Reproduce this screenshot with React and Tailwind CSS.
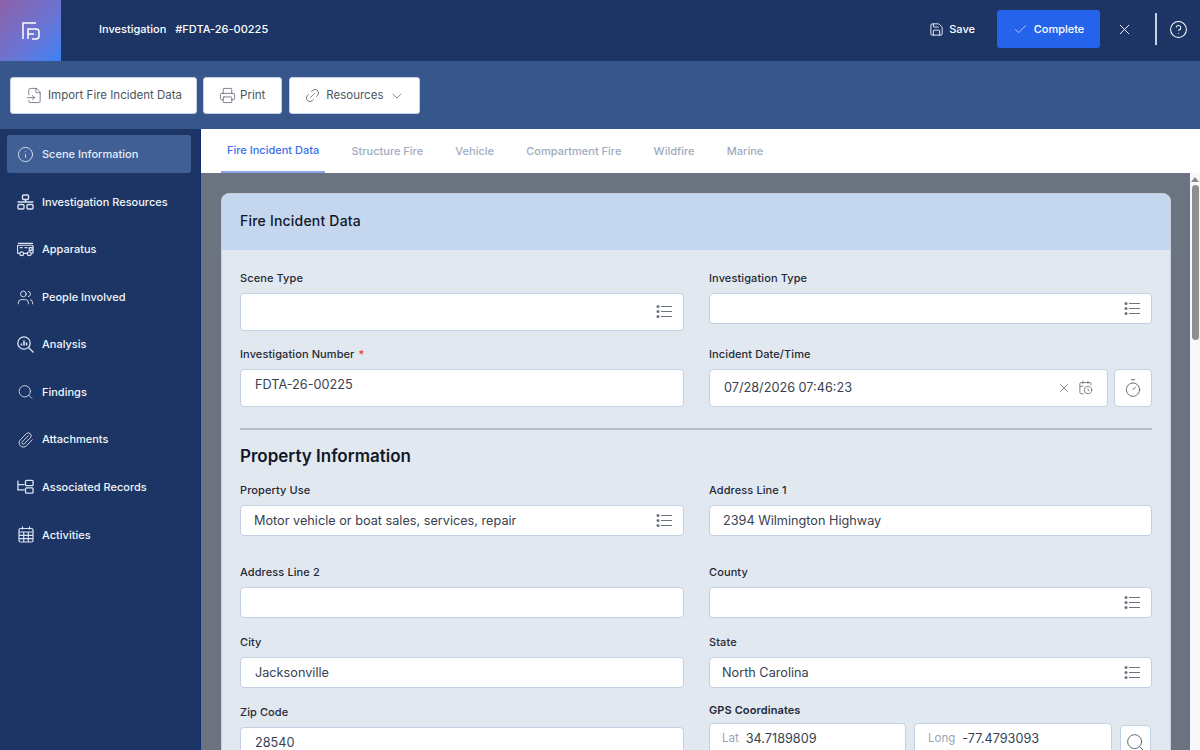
import React from "react";
import {
  FileInput, Printer, Link2, ChevronDown, Save, Check, X, CircleHelp, Info, Users,
  Search, Paperclip, CalendarClock, Timer,
} from "lucide-react";

function ListIcon() {
  return (
    <svg width="16" height="15" viewBox="0 0 16 15" fill="none" stroke="#6b7280" strokeWidth="1">
      <circle cx="2" cy="2.500" r="1.500" fill="#6b7280" stroke="none" />
      <circle cx="2" cy="7.500" r="1.500" fill="#6b7280" stroke="none" />
      <circle cx="2" cy="12.500" r="1.500" fill="#6b7280" stroke="none" />
      <path d="M5 2.500h11M5 7.500h11M5 12.500h11" />
    </svg>
  );
}

function ResourcesIcon() {
  return (
    <svg width="17" height="16" viewBox="0 0 17 16" fill="none" stroke="currentColor" strokeWidth="1.400">
      <rect x="5.500" y="1" width="6" height="4.500" rx="1" />
      <rect x="1" y="10.500" width="6" height="4.500" rx="1" />
      <rect x="10" y="10.500" width="6" height="4.500" rx="1" />
      <path d="M0.500 8h16M8.500 5.500V8" />
    </svg>
  );
}

function TruckIcon() {
  return (
    <svg width="18" height="15" viewBox="0 0 18 15" fill="none" stroke="currentColor" strokeWidth="1.300">
      <path d="M1 1h16" />
      <path d="M3 11.500H1.500a1 1 0 0 1-1-1V4a1 1 0 0 1 1-1h14.500a1 1 0 0 1 1 1v6.500a1 1 0 0 1-1 1H15M7 11.500h4" />
      <circle cx="5" cy="12" r="2" />
      <circle cx="13" cy="12" r="2" />
      <path d="M3 5.500h3M8 5.500h3M13 5.500h3v3h-3z" />
    </svg>
  );
}

function AnalysisIcon() {
  return (
    <svg width="17" height="17" viewBox="0 0 17 17" fill="none" stroke="currentColor" strokeWidth="1.300">
      <circle cx="7" cy="7" r="6.200" />
      <path d="m11.500 11.500 5 5" />
      <path d="M4.500 9.500V7.500M7 9.500V4.500M9.500 9.500V6.500" strokeWidth="1.600" />
    </svg>
  );
}

function RecordsIcon() {
  return (
    <svg width="18" height="16" viewBox="0 0 18 16" fill="none" stroke="currentColor" strokeWidth="1.400">
      <path d="M1 1v10h7M1 5.500h7" />
      <rect x="9" y="1" width="8" height="5.500" rx="1" />
      <rect x="9" y="9" width="8" height="5.500" rx="1" />
    </svg>
  );
}

function CalendarGridIcon() {
  return (
    <svg width="16" height="17" viewBox="0 0 16 17" fill="none" stroke="currentColor" strokeWidth="1.200">
      <rect x="1" y="2.500" width="14" height="13.500" rx="1.500" />
      <path d="M4.500 0.500v3M11.500 0.500v3" />
      <path d="M1 6h14M1 9.300h14M1 12.600h14M5.700 6v10M10.300 6v10" />
    </svg>
  );
}

function LogoIcon() {
  return (
    <svg width="18" height="18" viewBox="0 0 18 18" fill="none" stroke="white" strokeWidth="1.500">
      <path d="M1 17V1h13" />
      <path d="M6 17V7h8a3 3 0 0 1 3 3v4a3 3 0 0 1-3 3H10" />
      <path d="M6 12h6" />
    </svg>
  );
}

const NAV = [
  { label: "Scene Information", icon: <Info size={19} strokeWidth={1.3} />, active: true },
  { label: "Investigation Resources", icon: <ResourcesIcon /> },
  { label: "Apparatus", icon: <TruckIcon /> },
  { label: "People Involved", icon: <Users size={19} strokeWidth={1.3} /> },
  { label: "Analysis", icon: <AnalysisIcon /> },
  { label: "Findings", icon: <Search size={20} strokeWidth={1.2} /> },
  { label: "Attachments", icon: <Paperclip size={18} strokeWidth={1.3} /> },
  { label: "Associated Records", icon: <RecordsIcon /> },
  { label: "Activities", icon: <CalendarGridIcon /> },
];

const TABS = ["Fire Incident Data", "Structure Fire", "Vehicle", "Compartment Fire", "Wildfire", "Marine"];

function Input({ value, tall, list, pad = "pl-[13px]", right = "pr-[11px]", lift, children }) {
  return (
    <div
      className={`flex items-center flex-1 min-w-0 bg-white border border-[#c3cfe2] rounded-[4px] text-[12.700px] text-[#374151] ${
        tall ? "h-[37.500px]" : "h-[30.500px]"
      } ${pad} ${right} ${lift ? "pb-[6px]" : ""}`}
    >
      <span className="flex-1">{value}</span>
      {children}
      {list && <ListIcon />}
    </div>
  );
}

function Field({ label, required, children }) {
  return (
    <div>
      <div className="h-[23px] text-[11px] tracking-[0.1px] font-medium text-[#1f2937] leading-4">
        {label}
        {required && <span className="text-red-500 ml-1">*</span>}
      </div>
      <div className="flex gap-[6px]">{children}</div>
    </div>
  );
}

function Row({ height, children }) {
  return <div className={`grid grid-cols-[444px_443px] gap-x-[25px] shrink-0 ${height}`}>{children}</div>;
}

function ToolButton({ children }) {
  return (
    <button className="flex items-center h-[37px] pt-[1px] bg-white border border-[#c3cfe2] rounded-[3px] text-[11.500px] text-[#4b5563]">
      {children}
    </button>
  );
}

export default function App() {
  return (
    <div className="flex flex-col w-[1200px] h-[750px] overflow-hidden font-['Inter',sans-serif]">
      {/* top bar */}
      <header className="flex items-center h-[61px] shrink-0 pb-[3px] bg-[#1c3564] text-white">
        <div className="flex items-center justify-center w-[61px] h-[61px] -mb-[3px] bg-gradient-to-br from-[#8b5fa8] to-[#3b82f6]">
          <LogoIcon />
        </div>
        <div className="ml-[38px] text-[11px] font-medium">Investigation</div>
        <div className="ml-[9px] text-[11px] font-medium">#FDTA-26-00225</div>
        <div className="flex items-center ml-auto">
          <Save size={15} strokeWidth={1.4} />
          <span className="ml-[5px] text-[11px] font-medium">Save</span>
          <button className="flex items-center justify-center gap-[6px] w-[103px] h-[38px] ml-[22px] bg-[#2563eb] rounded-[3px] text-[11px] font-medium">
            <Check size={15} strokeWidth={1} />
            Complete
          </button>
          <X size={17} strokeWidth={1.3} className="ml-[16px]" />
          <div className="w-[2px] h-[32px] ml-[22px] bg-[#c9d3e6]" />
          <CircleHelp size={19} strokeWidth={1.3} className="ml-[12px] mr-[12px]" />
        </div>
      </header>

      {/* toolbar */}
      <div className="flex items-center gap-[6px] h-[68px] shrink-0 px-[10px] bg-[#37568c]">
        <ToolButton>
          <span className="flex items-center gap-[5px] pl-[15px] pr-[14px]">
            <FileInput size={17} strokeWidth={1} />
            Import Fire Incident Data
          </span>
        </ToolButton>
        <ToolButton>
          <span className="flex items-center gap-[4px] pl-[15px] pr-[16px]">
            <Printer size={17} strokeWidth={1} />
            Print
          </span>
        </ToolButton>
        <div className="ml-[1px]">
          <ToolButton>
            <span className="flex items-center gap-[5px] pl-[14px] pr-[14px]">
              <Link2 size={17} strokeWidth={1} className="-rotate-45" />
              Resources
              <ChevronDown size={16} strokeWidth={1} className="ml-[1px]" />
            </span>
          </ToolButton>
        </div>
      </div>

      <div className="flex flex-1 min-h-0">
        {/* sidebar */}
        <nav className="flex flex-col w-[201px] shrink-0 pt-[6.400px] pl-[7px] pr-[9px] bg-[#1c3564] border-r border-[#0e2a78]">
          {NAV.map((item) => (
            <div
              key={item.label}
              className={`flex items-center shrink-0 h-[38px] mb-[9.550px] pl-[10px] rounded-[3px] text-[11px] font-medium ${
                item.active ? "bg-[#3f5f95] text-[#e5edf9]" : "text-[#f1f5fb]"
              }`}
            >
              <span className="flex justify-center w-[17px] mr-[8px] text-[#dbe4f2]">{item.icon}</span>
              {item.label}
            </div>
          ))}
        </nav>

        <main className="flex flex-col flex-1 min-w-0">
          {/* tabs */}
          <div className="flex h-[44px] shrink-0 pl-[20px] bg-white">
            {TABS.map((t, i) => (
              <div
                key={t}
                className={`flex items-center h-full pt-[1px] px-[6px] mr-[20.250px] text-[11px] font-medium ${
                  i === 0 ? "text-[#3b6ef0] border-b-2 border-[#8ea4e6]" : "text-[#a1abc0]"
                }`}
              >
                {t}
              </div>
            ))}
          </div>

          <div className="flex flex-1 min-h-0 bg-[#6b7280]">
            <div className="flex-1 min-w-0 overflow-hidden pt-[20px] pl-[20px]">
              <section className="w-[950px] h-[600px] bg-[#e2e8f0] rounded-t-[8px] border border-[#c8d0dc]">
                <div className="flex items-center h-[56px] pl-[18px] pb-[3px] bg-[#c5d6ef] rounded-t-[8px] text-[14px] font-medium text-[#111827] tracking-[0.2px]">
                  Fire Incident Data
                </div>
                <div className="flex flex-col pt-[20px] pl-[18px]">
                  <Row height="h-[76px]">
                    <Field label="Scene Type">
                      <Input tall list />
                    </Field>
                    <Field label="Investigation Type">
                      <Input list />
                    </Field>
                  </Row>
                  <Row height="h-[60px]">
                    <Field label="Investigation Number" required>
                      <Input tall lift pad="pl-[14px]" value="FDTA-26-00225" />
                    </Field>
                    <Field label="Incident Date/Time">
                      <Input tall pad="pl-[14px]" right="pr-[14px]" value="07/28/2026 07:46:23">
                        <X size={14} strokeWidth={1.2} className="mr-[7px] text-[#4b5563]" />
                        <CalendarClock size={15} strokeWidth={1.1} className="text-[#4b5563]" />
                      </Input>
                      <button className="flex items-center justify-center w-[38px] h-[37.500px] bg-white border border-[#c3cfe2] rounded-[4px] text-[#4b5563]">
                        <Timer size={20} strokeWidth={1} />
                      </button>
                    </Field>
                  </Row>
                  <div className="w-[912px] h-[2px] mt-[22px] bg-[#b6bcc6]" />
                  <h2 className="h-[37px] mt-[15px] text-[17px] leading-[22px] font-semibold text-[#111827]">Property Information</h2>
                  <Row height="h-[82px]">
                    <Field label="Property Use">
                      <Input list value="Motor vehicle or boat sales, services, repair" />
                    </Field>
                    <Field label="Address Line 1">
                      <Input value="2394 Wilmington Highway" />
                    </Field>
                  </Row>
                  <Row height="h-[70px]">
                    <Field label="Address Line 2">
                      <Input />
                    </Field>
                    <Field label="County">
                      <Input list />
                    </Field>
                  </Row>
                  <Row height="h-[70px]">
                    <Field label="City">
                      <Input pad="pl-[14px]" value="Jacksonville" />
                    </Field>
                    <Field label="State">
                      <Input list pad="pl-[12px]" value="North Carolina" />
                    </Field>
                  </Row>
                  <Row height="h-[70px]">
                    <Field label="Zip Code">
                      <Input pad="pl-[14px]" value="28540" />
                    </Field>
                    <div className="-mt-[2px]">
                      <div className="h-[21px] text-[11px] tracking-[0.1px] font-semibold text-[#1f2937] leading-4">GPS Coordinates</div>
                      <div className="flex">
                        <div className="flex items-center self-start w-[197px] h-[38px] mr-[8px] pl-[12px] pb-[7px] bg-white border border-[#c3cfe2] rounded-[4px] text-[12.700px] text-[#374151]">
                          <span className="mr-[7px] text-[11.500px] text-[#9ca3af]">Lat</span>34.7189809
                        </div>
                        <div className="flex items-center self-start w-[198px] h-[38px] mr-[8px] pl-[13px] pb-[7px] bg-white border border-[#c3cfe2] rounded-[4px] text-[12.700px] text-[#374151]">
                          <span className="mr-[7px] text-[11.500px] text-[#9ca3af]">Long</span>-77.4793093
                        </div>
                        <button className="flex items-start justify-center w-[31px] h-[38px] mt-[2px] pt-[6px] bg-white border border-[#c3cfe2] rounded-[4px] text-[#4b5563]">
                          <Search size={21} strokeWidth={1} />
                        </button>
                      </div>
                    </div>
                  </Row>
                </div>
              </section>
            </div>

            {/* page scrollbar */}
            <div className="flex flex-col items-center w-[10px] shrink-0 bg-[#f8f8f8]">
              <div className="w-0 h-0 mt-[4px] border-x-[4px] border-x-transparent border-b-[5px] border-b-[#8a8a8a]" />
              <div className="w-[7px] h-[155px] mt-[3px] rounded-full bg-[#8f8f8f]" />
            </div>
          </div>
        </main>
      </div>
    </div>
  );
}
